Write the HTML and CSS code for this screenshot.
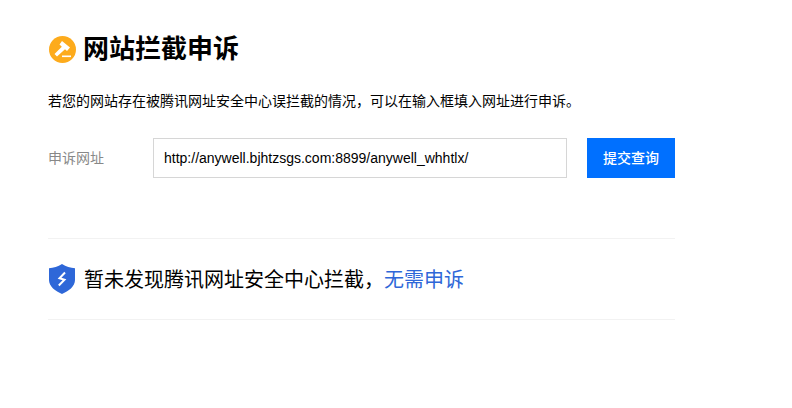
FILE: index.html
```html
<!DOCTYPE html>
<html lang="zh-CN">
<head>
<meta charset="utf-8">
<title>网站拦截申诉</title>
<link rel="stylesheet" href="styles.css">
</head>
<body>
<main class="page">
  <header class="head">
    <svg class="head-icon" viewBox="0 0 27 27" aria-hidden="true">
      <circle cx="13.500" cy="13.500" r="13.500" fill="#fdab1c"/>
      <path d="M13 5 L21 11.500 L18 15 L16 13.300 L8 20.500 L5.500 18 L12.800 10.800 L10.500 8.500 Z" fill="#fff"/>
      <rect x="13" y="19.500" width="9" height="1.600" fill="#fff"/>
    </svg>
    <h1 class="title">网站拦截申诉</h1>
  </header>
  <p class="desc">若您的网站存在被腾讯网址安全中心误拦截的情况，可以在输入框填入网址进行申诉。</p>
  <form class="form">
    <label class="label" for="url">申诉网址</label>
    <input class="input" id="url" type="text" value="http://anywell.bjhtzsgs.com:8899/anywell_whhtlx/">
    <button class="btn" type="button">提交查询</button>
  </form>
  <section class="result">
    <svg class="shield" viewBox="0 0 26 30" aria-hidden="true">
      <path d="M13 0 C17 2.800 21.500 4 26 4.200 V16 C26 22.500 19.500 27.200 13 30 C6.500 27.200 0 22.500 0 16 V4.200 C4.500 4 9 2.800 13 0 Z" fill="#2e67d8"/>
      <path d="M16 8.500 L10.500 14.200 L15.500 15.800 L9.800 21.500" fill="none" stroke="#fff" stroke-width="2"/>
    </svg>
    <p class="result-text">暂未发现腾讯网址安全中心拦截，<span class="result-link">无需申诉</span></p>
  </section>
</main>
</body>
</html>
```
FILE: styles.css
```css
* { box-sizing: border-box; }
html, body { margin: 0; padding: 0; background: #fff; }
body { font-family: "Liberation Sans", "Noto Sans CJK SC", sans-serif; color: #000; }
.page { width: 627px; margin-left: 48px; padding-top: 33px; }
.head { display: flex; align-items: center; gap: 7px; height: 32px; padding-left: 1px; }
.head-icon { width: 27px; height: 27px; flex: none; }
.title { margin: 0; font-size: 26px; line-height: 32px; font-weight: 700; }
.desc { margin: 26px 0 0; font-size: 14px; line-height: 20px; }
.form { display: flex; align-items: center; margin-top: 27px; }
.label { width: 105px; margin-bottom: 2px; font-size: 14px; color: #888; }
.input { width: 414px; height: 40px; border: 1px solid #d6d6d6; border-radius: 0; padding: 0 10px; font: 14px "Liberation Sans", sans-serif; color: #000; outline: none; }
.btn { width: 88px; height: 40px; margin-left: 20px; padding: 0 0 2px; border: 0; border-radius: 0; background: #0070ff; color: #fff; font: 500 14px "Noto Sans CJK SC", sans-serif; }
.result { display: flex; align-items: center; gap: 9px; height: 82px; margin-top: 60px; padding-left: 1px; border-top: 1px solid #f2f2f2; border-bottom: 1px solid #f2f2f2; }
.shield { width: 26px; height: 30px; flex: none; }
.result-text { margin: 2px 0 0; font-size: 20px; line-height: 28px; }
.result-link { color: #2e67d8; }
```
